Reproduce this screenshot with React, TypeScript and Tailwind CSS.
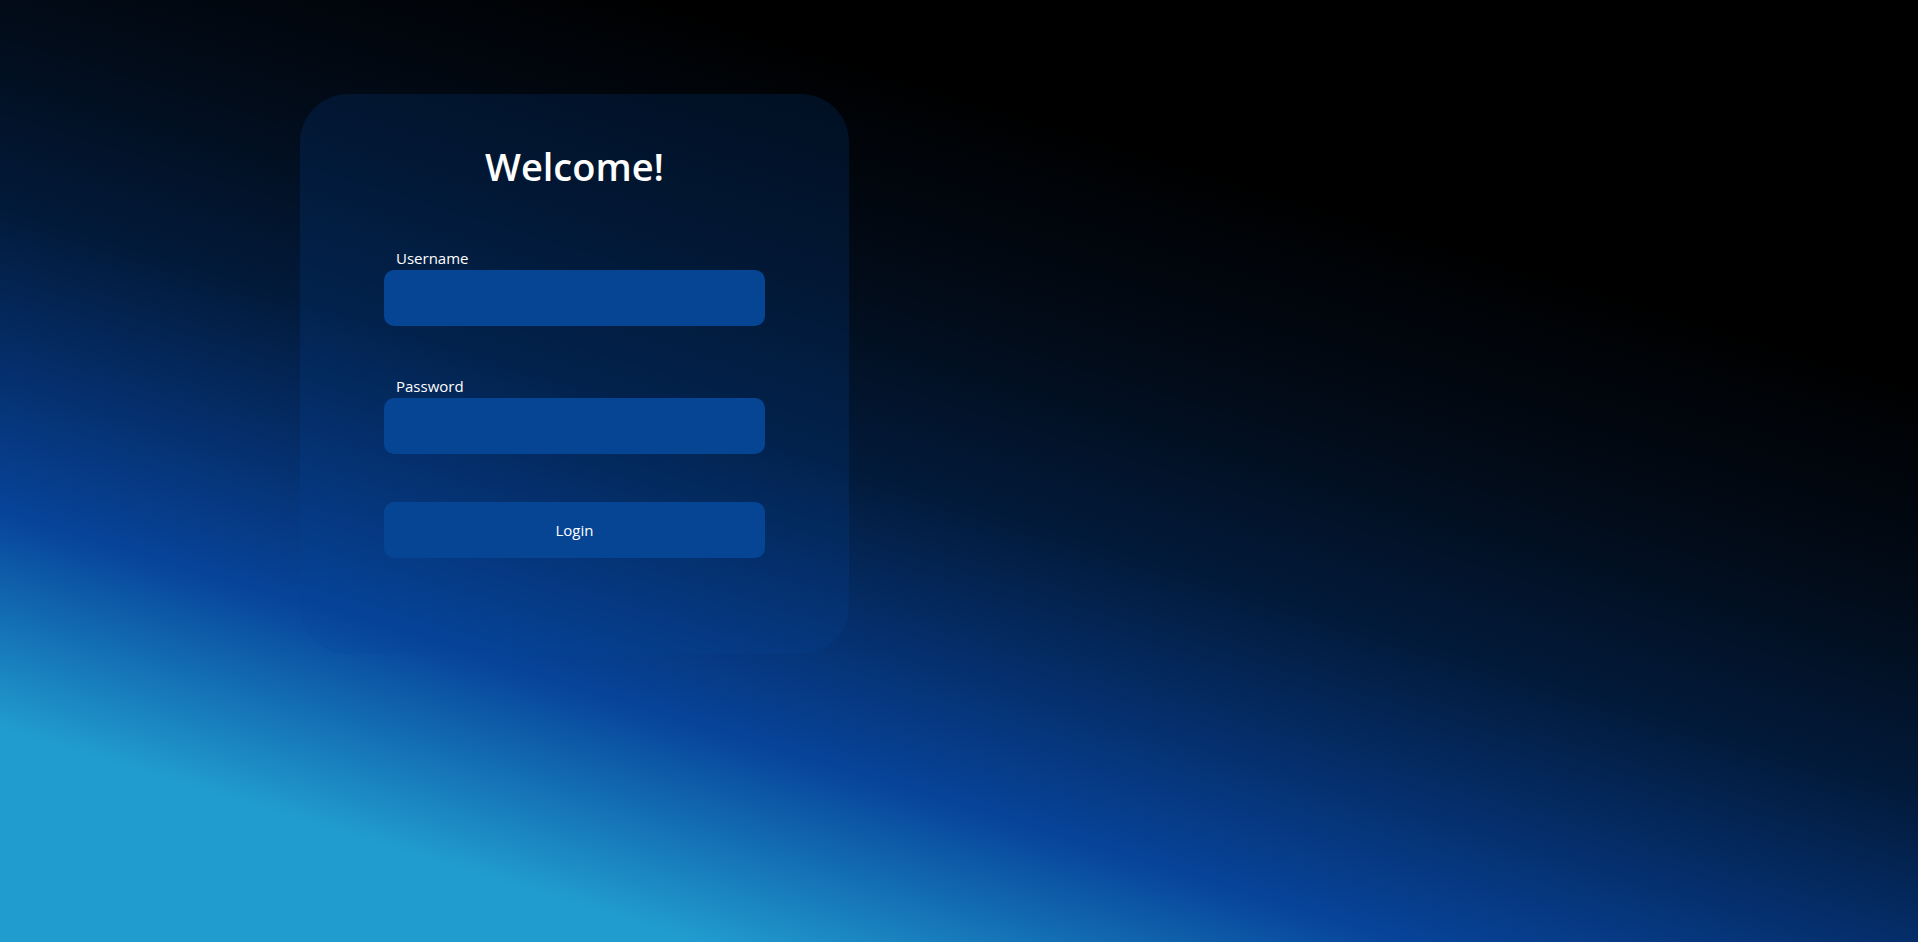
import React from 'react';

function Field({ label, type }: { label: string; type: string }) {
  return (
    <div className="flex flex-col">
      <label className="pl-3 mb-[2px] text-[15px] leading-5 text-white">{label}</label>
      <input
        type={type}
        className="h-14 w-full rounded-[10px] bg-[#064594] px-4 text-[15px] text-white outline-none"
      />
    </div>
  );
}

export default function App() {
  return (
    <div
      className="h-screen w-full overflow-hidden bg-[linear-gradient(17deg,#219ccf_0%,#219ccf_14%,#07449a_28%,#05306f_37%,#021a3a_48%,#020c1a_60%,#000_75%,#000_100%)] pl-[300px] pt-[94px]"
      style={{ fontFamily: '"Open Sans", "Noto Sans", sans-serif' }}
    >
      <div className="flex w-[549px] flex-col rounded-[48px] bg-[#07449a]/20 px-[84px] pt-12 pb-24">
        <h1 className="text-center text-[38px] font-semibold leading-[48px] text-white">Welcome!</h1>

        <div className="mt-[58px]">
          <Field label="Username" type="text" />
        </div>
        <div className="mt-[50px]">
          <Field label="Password" type="password" />
        </div>

        <button className="mt-12 h-14 w-full rounded-[10px] bg-[#064594] text-[15px] text-white">
          Login
        </button>
      </div>
    </div>
  );
}
